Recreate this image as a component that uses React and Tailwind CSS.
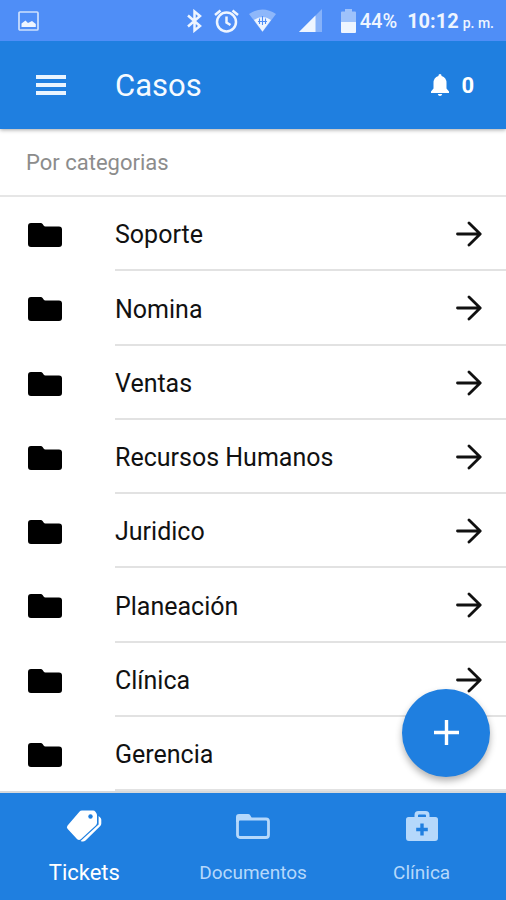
const categories = [
  'Soporte',
  'Nomina',
  'Ventas',
  'Recursos Humanos',
  'Juridico',
  'Planeación',
  'Clínica',
  'Gerencia',
]

function FolderIcon() {
  return (
    <svg width="34" height="24" viewBox="0 0 34 24" fill="currentColor" aria-hidden="true">
      <path d="M3 0H12.5Q14 0 14.8 1.2L15.6 2.6Q16.2 3.5 17.4 3.5H31Q34 3.5 34 6.5V21Q34 24 31 24H3Q0 24 0 21V3Q0 0 3 0Z" />
    </svg>
  )
}

function ArrowIcon() {
  return (
    <svg width="26" height="26" viewBox="0 0 26 26" fill="none" stroke="currentColor" strokeWidth="2.8" strokeLinecap="round" strokeLinejoin="round" aria-hidden="true">
      <path d="M1.5 13H24M13 2L24.2 13L13 24" />
    </svg>
  )
}

function TagsIcon() {
  return (
    <svg width="36" height="32" viewBox="0 0 36 32" aria-hidden="true">
      <path fill="currentColor" d="M16 0.5H27Q28.6 0.5 29.4 1.7L30.4 3.2Q31 4 31 5.2V12.8Q31 14.2 30 15.2L14.8 29.3Q13 30.8 11.2 29.2L1.5 18.7Q0.2 17 1.6 15.4L13.4 1.7Q14.4 0.5 16 0.5Z" />
      <path fill="currentColor" d="M32.6 6L34 7.2Q35.3 8.2 35.3 9.8V13.6Q35.3 15 34.3 16L19.5 30.6Q17.3 32.4 14.6 31L32.6 14.5Z" />
      <circle cx="24.5" cy="6.5" r="2.2" fill="#1f7fe0" />
    </svg>
  )
}

function FolderOutlineIcon() {
  return (
    <svg width="34" height="25" viewBox="0 0 34 25" aria-hidden="true">
      <rect x="1.5" y="5" width="31" height="18.5" rx="2.5" fill="none" stroke="currentColor" strokeWidth="2.8" />
      <path fill="currentColor" d="M0 8V3Q0 0 3 0H12Q13.6 0 14.4 1.4L16 4.5V6H3V8Z" />
    </svg>
  )
}

function MedkitIcon() {
  return (
    <svg width="32" height="30" viewBox="0 0 32 30" fill="currentColor" fillRule="evenodd" aria-hidden="true">
      <path d="M2.5 6H8.5V4Q8.5 0 12.5 0H19.5Q23.5 0 23.5 4V6H29.5Q32 6 32 8.5V27Q32 30 29 30H3Q0 30 0 27V8.5Q0 6 2.5 6ZM12 6H20V4.5Q20 3.5 19 3.5H13Q12 3.5 12 4.5ZM14.3 12.5V16.7H10.2V20.2H14.3V24.5H17.7V20.2H21.8V16.7H17.7V12.5Z" />
    </svg>
  )
}

const tabs = [
  { label: 'Tickets', icon: TagsIcon, active: true },
  { label: 'Documentos', icon: FolderOutlineIcon },
  { label: 'Clínica', icon: MedkitIcon },
]

function StatusBar() {
  return (
    <div className="flex h-[41px] items-center bg-[#4f8ef7] pl-[18px] pr-3 text-[#eef5ff]">
      <svg width="22" height="20" viewBox="0 0 22 20" aria-hidden="true">
        <rect x="1" y="1" width="19" height="18" rx="1" fill="none" stroke="currentColor" strokeWidth="1.7" opacity="0.8" />
        <path fill="currentColor" d="M3.5 16V12.5L7.5 9.5L10 12L14 10L17.8 13V16Z" />
      </svg>
      <svg className="ml-auto" width="15" height="24" viewBox="0 0 15 24" fill="none" stroke="currentColor" strokeWidth="2.5" aria-hidden="true">
        <path d="M1 6.5L13 17L7.5 21.5V2.5L13 7L1 17.5" />
      </svg>
      <svg className="ml-3" width="25" height="24" viewBox="0 0 25 24" fill="none" stroke="currentColor" strokeWidth="2.5" aria-hidden="true">
        <circle cx="12.5" cy="13" r="9.5" />
        <path d="M12.5 7.5V13.5L16.5 16M1 6L6.5 1.5M24 6L18.5 1.5" />
      </svg>
      <svg className="ml-2.5" width="27" height="23" viewBox="0 0 27 23" aria-hidden="true">
        <path fill="currentColor" opacity="0.4" d="M0 5Q13.5 -4 27 5L13.5 23Z" />
        <path fill="currentColor" d="M5 11Q13.5 5 22 11L13.5 22.5Z" />
        <path fill="none" stroke="#4f8ef7" strokeWidth="1.1" d="M13.5 7V16M9 12.500H18M10.500 9.500V15M16.500 9.500V15" />
      </svg>
      <svg className="ml-[23px]" width="23" height="23" viewBox="0 0 23 23" aria-hidden="true">
        <path fill="currentColor" opacity="0.35" d="M0 23L23 0V23Z" />
        <path fill="currentColor" d="M0 23L16.5 6.5V23Z" />
      </svg>
      <svg className="ml-[19px]" width="15" height="24" viewBox="0 0 15 24" aria-hidden="true">
        <path fill="currentColor" opacity="0.5" d="M0 13V3.5Q0 2.5 1 2.5H4V0H11V2.5H14Q15 2.5 15 3.5V13Z" />
        <path fill="currentColor" d="M0 13H15V23Q15 24 14 24H1Q0 24 0 23Z" />
      </svg>
      <span className="ml-1 text-[20px] font-medium">44%</span>
      <span className="ml-2.5 flex items-baseline gap-1 whitespace-nowrap text-[20px] font-bold">
        10:12 <span className="text-[14px] font-medium">p. m.</span>
      </span>
    </div>
  )
}

export default function App() {
  return (
    <div className="flex min-h-screen flex-col bg-white font-['Roboto',sans-serif] text-[#111]">
      <header className="relative text-white shadow-[0_1px_4px_rgba(0,0,0,0.35)]">
        <StatusBar />
        <div className="flex h-[88px] items-center bg-[#1f7fe0] pl-9 pr-8">
          <button type="button" aria-label="Menú" className="flex w-[79px]">
            <svg width="30" height="20" viewBox="0 0 30 20" fill="#e9f4ff" aria-hidden="true">
              <path d="M0 0H30V4H0ZM0 8H30V12H0ZM0 16H30V20H0Z" />
            </svg>
          </button>
          <h1 className="pt-0.5 text-[31px] text-[#f5faff]">Casos</h1>
          <button type="button" aria-label="Notificaciones: 0" className="ml-auto flex items-center gap-3 text-[22px] font-bold">
            <svg width="18" height="22" viewBox="0 0 18 22" fill="currentColor" aria-hidden="true">
              <path d="M9 0Q10.6 0 10.6 2Q15.5 3.5 15.5 9V14.5L18 17.5V19H0V17.5L2.5 14.5V9Q2.5 3.5 7.4 2Q7.4 0 9 0ZM6.8 20H11.2Q10.8 22 9 22Q7.2 22 6.8 20Z" />
            </svg>
            0
          </button>
        </div>
      </header>

      <main className="flex flex-1 flex-col">
        <h2 className="flex h-[68px] items-center border-b-2 border-[#e6e6e6] pl-[26px] text-[22px] text-[#8c8c8c]">
          Por categorias
        </h2>
        <ul className="grid flex-1 auto-rows-fr">
          {categories.map((name) => (
            <li key={name} className="flex">
              <button type="button" className="flex flex-1 text-left">
                <span className="flex w-[115px] items-center self-stretch pl-7 pt-0.5 text-black">
                  <FolderIcon />
                </span>
                <span className="flex flex-1 items-center justify-between self-stretch border-b-2 border-[#e2e2e2] pr-6 pt-0.5 text-[25px]">
                  <span className="pt-0.5">{name}</span>
                  <ArrowIcon />
                </span>
              </button>
            </li>
          ))}
        </ul>
      </main>

      <button
        type="button"
        aria-label="Agregar"
        className="fixed bottom-[123px] right-4 flex size-[88px] items-center justify-center rounded-full bg-[#1f7fe0] pb-0.5 text-white shadow-[0_4px_7px_rgba(0,0,0,0.3)]"
      >
        <svg width="25" height="25" viewBox="0 0 25 25" fill="currentColor" aria-hidden="true">
          <path d="M10.8 0H14.2V10.8H25V14.2H14.2V25H10.8V14.2H0V10.8H10.8Z" />
        </svg>
      </button>

      <nav className="grid h-[109px] grid-cols-3 border-t-2 border-[#d6d9dc] bg-[#1f7fe0]">
        {tabs.map(({ label, icon: Icon, active }) => (
          <button
            key={label}
            type="button"
            className={`flex flex-col items-center ${active ? 'text-[22px] text-white' : 'text-[19px] text-[#b5d8fb]'}`}
          >
            <span className="flex h-[66px] items-center">
              <Icon />
            </span>
            <span className="leading-7">{label}</span>
          </button>
        ))}
      </nav>
    </div>
  )
}
